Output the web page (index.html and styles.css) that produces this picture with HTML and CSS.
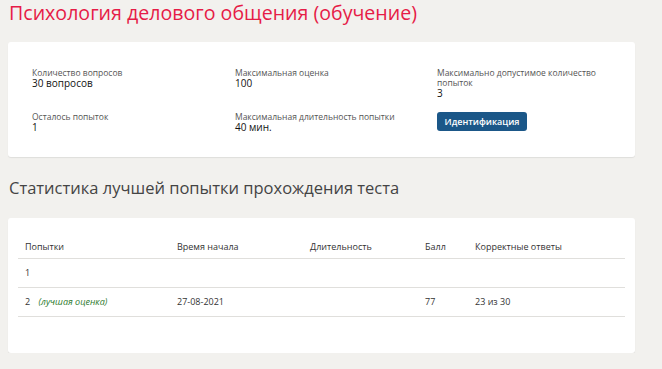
FILE: index.html
```html
<!DOCTYPE html>
<html lang="ru">
<head>
    <meta charset="UTF-8">
    <meta name="viewport" content="width=device-width, initial-scale=1.0">
    <title>Психология делового общения (обучение)</title>
    <link rel="stylesheet" href="styles.css">
</head>
<body>
    <div class="page">
        <h1 class="title">Психология делового общения (обучение)</h1>

        <div class="card info">
            <div class="info-item">
                <div class="label">Количество вопросов</div>
                <div class="value">30 вопросов</div>
            </div>
            <div class="info-item">
                <div class="label">Максимальная оценка</div>
                <div class="value">100</div>
            </div>
            <div class="info-item">
                <div class="label">Максимально допустимое количество<br>попыток</div>
                <div class="value">3</div>
            </div>
            <div class="info-item">
                <div class="label">Осталось попыток</div>
                <div class="value">1</div>
            </div>
            <div class="info-item">
                <div class="label">Максимальная длительность попытки</div>
                <div class="value">40 мин.</div>
            </div>
            <div class="info-item">
                <button class="btn">Идентификация</button>
            </div>
        </div>

        <h2 class="subtitle">Статистика лучшей попытки прохождения теста</h2>

        <div class="card stats">
            <table class="stats-table">
                <thead>
                    <tr>
                        <th class="col-try">Попытки</th>
                        <th class="col-start">Время начала</th>
                        <th class="col-dur">Длительность</th>
                        <th class="col-score">Балл</th>
                        <th>Корректные ответы</th>
                    </tr>
                </thead>
                <tbody>
                    <tr>
                        <td>1</td>
                        <td></td>
                        <td></td>
                        <td></td>
                        <td></td>
                    </tr>
                    <tr>
                        <td>2 <span class="best">(лучшая оценка)</span></td>
                        <td>27-08-2021</td>
                        <td></td>
                        <td>77</td>
                        <td>23 из 30</td>
                    </tr>
                </tbody>
            </table>
        </div>
    </div>
</body>
</html>
```

FILE: styles.css
```css
body {
    margin: 0;
    background: #f2f1ee;
    font-family: 'Open Sans', 'Liberation Sans', sans-serif;
    color: #333;
}
.page {
    width: 627px;
    padding-left: 8px;
}
.title {
    margin: 0 0 16px 1px;
    font-size: 19.6px;
    line-height: 26px;
    font-weight: 400;
    color: #e61c47;
}
.card {
    background: #ffffff;
    border-radius: 3px;
    box-shadow: 0 1px 1px rgba(0, 0, 0, 0.08);
    box-sizing: border-box;
}
.info {
    display: grid;
    grid-template-columns: 203px 202px 1fr;
    row-gap: 13px;
    padding: 26px 24px 24px 24px;
}
.label {
    font-size: 8.5px;
    line-height: 10px;
    color: #555;
}
.value {
    font-size: 10px;
    line-height: 11px;
    color: #111;
}
.btn {
    display: block;
    width: 90px;
    height: 19px;
    padding: 0;
    border: none;
    border-radius: 3px;
    background: #1b5788;
    color: #fff;
    font-family: inherit;
    font-size: 9px;
    font-weight: 600;
}
.subtitle {
    margin: 19px 0 18px 1px;
    font-size: 16.5px;
    line-height: 24px;
    font-weight: 400;
    color: #444;
}
.stats {
    padding: 20px 10px 36px 10px;
}
.stats-table {
    width: 100%;
    border-collapse: collapse;
    font-size: 9px;
}
.stats-table th {
    text-align: left;
    font-weight: 400;
    line-height: 12px;
    padding: 3px 7px 5px 7px;
    border-bottom: 1px solid #e0dfdc;
}
.stats-table td {
    line-height: 12px;
    padding: 8px 7px;
    border-bottom: 1px solid #e0dfdc;
}
.col-try { width: 138px; }
.col-start { width: 119px; }
.col-dur { width: 101px; }
.col-score { width: 36px; }
.best {
    margin-left: 6px;
    font-size: 9px;
    font-style: italic;
    color: #2d7a2d;
}
```
